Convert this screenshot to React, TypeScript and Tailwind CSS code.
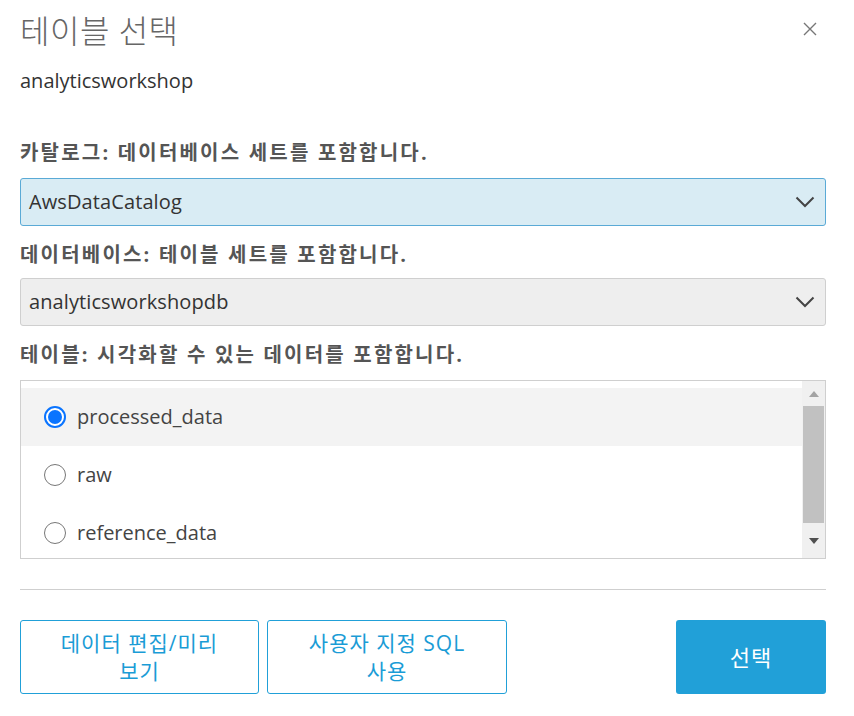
import { useState } from "react";

const FONT = {
  fontFamily: '"Open Sans", "Noto Sans CJK KR", sans-serif',
};

const Chevron = () => (
  <svg width="20" height="12" viewBox="0 0 20 12" className="shrink-0">
    <path d="M1.5 1.5 L10 10 L18.5 1.5" fill="none" stroke="#444" strokeWidth="2" />
  </svg>
);

const SelectBox = ({ value, active }: { value: string; active?: boolean }) => (
  <div
    className={`mt-[10px] flex h-[48px] items-center justify-between rounded-[3px] border pl-[8px] pr-[10px] text-[20px] text-[#333] ${
      active ? "bg-[#d9ecf4] border-[#5aaad6]" : "bg-[#eeeeee] border-[#cfcfcf]"
    }`}
  >
    <span className="tracking-[0.1px]">{value}</span>
    <Chevron />
  </div>
);

const Label = ({ children, className = "" }: { children: string; className?: string }) => (
  <p className={`h-[30px] leading-[30px] text-[20px] font-bold tracking-[2.2px] text-[#555] ${className}`}>
    {children}
  </p>
);

const tables = ["processed_data", "raw", "reference_data"];

export default function App() {
  const [selected, setSelected] = useState("processed_data");

  return (
    <div className="w-[854px] h-[716px] bg-white pl-5 pr-[28px]" style={FONT}>
      <div className="flex h-[62px] items-center justify-between">
        <h1 className="text-[32px] font-light tracking-[0.5px] text-[#666] leading-none">테이블 선택</h1>
        <button type="button" className="mr-[5px] -mt-[4px] p-1">
          <svg width="14" height="14" viewBox="0 0 14 14">
            <path d="M1 1 L13 13 M13 1 L1 13" stroke="#777" strokeWidth="1.4" />
          </svg>
        </button>
      </div>

      <p className="h-[38px] leading-[38px] text-[20px] text-[#333]">analyticsworkshop</p>

      <Label className="mt-[38px]">카탈로그: 데이터베이스 세트를 포함합니다.</Label>
      <SelectBox value="AwsDataCatalog" active />

      <Label className="mt-[14px]">데이터베이스: 테이블 세트를 포함합니다.</Label>
      <div className="-mt-[2px]">
        <SelectBox value="analyticsworkshopdb" />
      </div>

      <Label className="mt-[14px]">테이블: 시각화할 수 있는 데이터를 포함합니다.</Label>

      <div className="mt-[10px] flex h-[179px] border border-[#cfcfcf]">
        <div className="flex-1 pt-[7px]">
          {tables.map((t) => {
            const on = selected === t;
            return (
              <div
                key={t}
                onClick={() => setSelected(t)}
                className={`flex h-[58px] items-center gap-[11px] pl-[23px] text-[20px] text-[#444] ${
                  on ? "bg-[#f3f3f3]" : ""
                }`}
              >
                {on ? (
                  <span className="flex h-[22px] w-[22px] items-center justify-center rounded-full border-2 border-[#0a74ff] bg-white">
                    <span className="h-[14px] w-[14px] rounded-full bg-[#0a74ff]" />
                  </span>
                ) : (
                  <span className="h-[22px] w-[22px] rounded-full border-[1.5px] border-[#777] bg-white" />
                )}
                <span>{t}</span>
              </div>
            );
          })}
        </div>
        <div className="flex w-[23px] flex-col items-center bg-[#f0f0f0]">
          <div className="flex h-[25px] items-center justify-center">
            <svg width="10" height="6" viewBox="0 0 10 6">
              <path d="M0 6 L5 0 L10 6 Z" fill="#a3a3a3" />
            </svg>
          </div>
          <div className="h-[117px] w-[21px] bg-[#c1c1c1]" />
          <div className="flex flex-1 items-center justify-center">
            <svg width="10" height="6" viewBox="0 0 10 6">
              <path d="M0 0 L10 0 L5 6 Z" fill="#505050" />
            </svg>
          </div>
        </div>
      </div>

      <div className="mt-[30px] h-px bg-[#cfcfcf]" />

      <div className="mt-[30px] flex items-stretch">
        <button
          type="button"
          className="flex h-[74px] w-[239px] items-center justify-center rounded-[3px] border-[1.5px] border-[#21a0d8] px-3 text-[21px] leading-[28px] tracking-[1px] text-[#1a9cd6]"
        >
          데이터 편집/미리
          <br />
          보기
        </button>
        <button
          type="button"
          className="ml-[8px] flex h-[74px] w-[240px] items-center justify-center rounded-[3px] border-[1.5px] border-[#21a0d8] px-3 text-[21px] leading-[28px] tracking-[1px] text-[#1a9cd6]"
        >
          사용자 지정 SQL
          <br />
          사용
        </button>
        <button
          type="button"
          className="ml-auto flex h-[74px] w-[150px] items-center justify-center rounded-[3px] bg-[#21a0d8] text-[22px] tracking-[1px] text-white"
        >
          선택
        </button>
      </div>
    </div>
  );
}
